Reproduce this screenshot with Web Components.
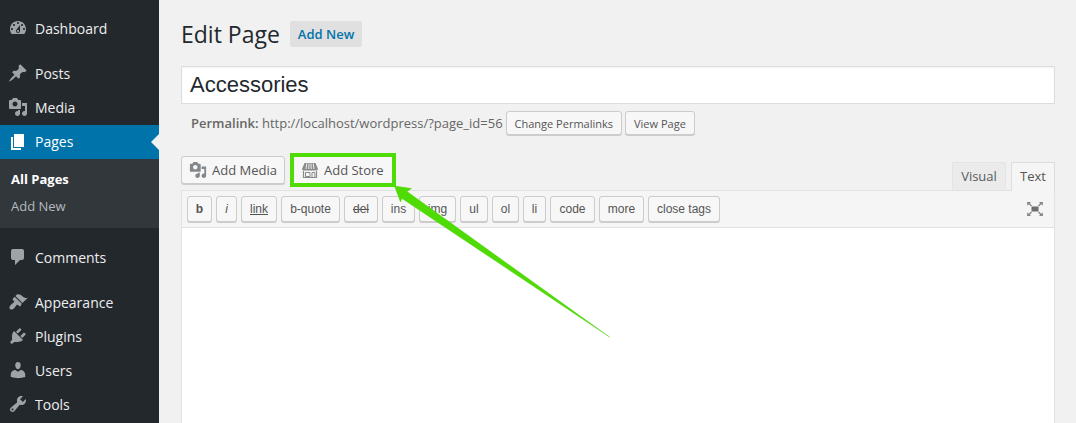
<!DOCTYPE html>
<html>
<head>
<meta charset="utf-8">
<title>Edit Page</title>
<style>
  html, body { margin: 0; height: 423px; overflow: hidden; background: #f1f1f1; }
  body { font-family: "Open Sans", sans-serif; }
</style>
</head>
<body>
<wp-admin>
  <wp-sidebar slot="sidebar">
    <wp-menu-item icon="dashboard">Dashboard</wp-menu-item>
    <wp-menu-sep></wp-menu-sep>
    <wp-menu-item icon="post">Posts</wp-menu-item>
    <wp-menu-item icon="media">Media</wp-menu-item>
    <wp-menu-item icon="page" active style="margin-top:1px">Pages</wp-menu-item>
    <wp-submenu>
      <wp-submenu-item current>All Pages</wp-submenu-item>
      <wp-submenu-item>Add New</wp-submenu-item>
    </wp-submenu>
    <wp-menu-item icon="comments" style="margin-top:12px">Comments</wp-menu-item>
    <wp-menu-sep></wp-menu-sep>
    <wp-menu-item icon="appearance">Appearance</wp-menu-item>
    <wp-menu-item icon="plugins">Plugins</wp-menu-item>
    <wp-menu-item icon="users">Users</wp-menu-item>
    <wp-menu-item icon="tools">Tools</wp-menu-item>
  </wp-sidebar>
  <wp-page-head></wp-page-head>
  <wp-title-box value="Accessories"></wp-title-box>
  <wp-permalink url="http://localhost/wordpress/?page_id=56"></wp-permalink>
  <wp-editor></wp-editor>
</wp-admin>

<script>
const ICONS = {
  dashboard: 'M3.76 16h12.48c1.1-1.37 1.76-3.11 1.76-5 0-4.42-3.58-8-8-8s-8 3.58-8 8c0 1.89.66 3.63 1.76 5zM10 4c.55 0 1 .45 1 1s-.45 1-1 1-1-.45-1-1 .45-1 1-1zM6 6c.55 0 1 .45 1 1s-.45 1-1 1-1-.45-1-1 .45-1 1-1zm8 0c.55 0 1 .45 1 1s-.45 1-1 1-1-.45-1-1 .45-1 1-1zm-5.37 5.55L12 7v6c0 1.1-.9 2-2 2s-2-.9-2-2c0-.57.24-1.08.63-1.45zM4 10c.55 0 1 .45 1 1s-.45 1-1 1-1-.45-1-1 .45-1 1-1zm12 0c.55 0 1 .45 1 1s-.45 1-1 1-1-.45-1-1 .45-1 1-1zm-5 3c0-.55-.45-1-1-1s-1 .45-1 1 .45 1 1 1 1-.45 1-1z',
  post: 'M10.44 3.02l1.82-1.82 6.36 6.35-1.83 1.82c-1.05-.68-2.48-.57-3.41.36l-.75.75c-.92.93-1.04 2.35-.35 3.41l-1.83 1.82-2.41-2.41-2.8 2.79c-.42.42-3.38 2.71-3.8 2.29s1.86-3.39 2.28-3.81l2.79-2.79L4.1 9.36l1.83-1.82c1.05.69 2.48.57 3.4-.36l.75-.75c.93-.92 1.05-2.35.36-3.41z',
  media: 'M13 11V4c0-.55-.45-1-1-1h-1.67L9 1H5L3.67 3H2c-.55 0-1 .45-1 1v7c0 .55.45 1 1 1h10c.55 0 1-.45 1-1zM7 4.5c1.38 0 2.5 1.12 2.5 2.5S8.38 9.5 7 9.5 4.5 8.38 4.5 7 5.62 4.5 7 4.5zM14 6h5v10.5c0 1.38-1.12 2.5-2.5 2.5S14 17.88 14 16.5s1.12-2.5 2.5-2.5c.17 0 .34.02.5.05V9h-3V6zm-4 8.05V13h2v3.5c0 1.38-1.12 2.5-2.5 2.5S7 17.88 7 16.5 8.12 14 9.5 14c.17 0 .34.02.5.05z',
  page: 'M6 15V2h10v13H6zm-1 1h8v2H3V5h2v11z',
  comments: 'M5 2h9c1.1 0 2 .9 2 2v7c0 1.1-.9 2-2 2h-2l-5 5v-5H5c-1.1 0-2-.9-2-2V4c0-1.1.9-2 2-2z',
  appearance: 'M14.48 11.06L7.41 3.99l1.5-1.5c.5-.56 2.3-.47 3.51.32 1.21.8 1.43 1.28 2.91 2.1 1.18.64 2.45 1.26 4.45.85zm-.71.71L6.7 4.7 4.93 6.47c-.39.39-.39 1.02 0 1.41l1.06 1.06c.39.39.39 1.03 0 1.42-.6.6-1.43 1.11-2.21 1.69-.35.26-.7.53-1.01.84-1.35 1.35-1.85 3.1-.79 4.16 1.06 1.06 2.81.56 4.16-.79.31-.31.58-.66.84-1.01.58-.78 1.09-1.61 1.69-2.21.39-.39 1.03-.39 1.42 0l1.06 1.06c.39.39 1.02.39 1.41 0z',
  plugins: 'M13.11 4.36L9.87 7.6 8 5.73l3.24-3.24c.35-.34 1.05-.2 1.56.32.52.51.66 1.21.31 1.55zm-8 1.77l.91-1.12 9.01 9.01-1.19.84c-.71.71-2.63 1.16-3.82 1.16H6.14L4.9 17.26c-.59.59-1.54.59-2.12 0-.59-.58-.59-1.53 0-2.12l1.24-1.24v-3.88c0-1.13.4-3.19 1.09-3.89zm7.26 3.97l3.24-3.24c.34-.35 1.04-.21 1.55.31.52.51.66 1.21.31 1.55l-3.24 3.25z',
  users: 'M10 9.25c-2.27 0-2.73-3.44-2.73-3.44C7 4.02 7.82 2 9.97 2c2.16 0 2.98 2.02 2.71 3.81 0 0-.41 3.44-2.68 3.44zm0 2.57L12.72 10c2.39 0 4.52 2.33 4.52 4.53v2.49s-3.65 1.13-7.24 1.13c-3.65 0-7.24-1.13-7.24-1.13v-2.49c0-2.25 1.94-4.48 4.47-4.48z',
  tools: 'M16.68 9.77c-1.34 1.34-3.3 1.67-4.95.99l-5.41 6.52c-.99.99-2.59.99-3.58 0s-.99-2.59 0-3.57l6.52-5.42c-.68-1.65-.35-3.61.99-4.95 1.28-1.28 3.12-1.62 4.72-1.06l-2.89 2.89 2.82 2.82 2.86-2.87c.53 1.58.18 3.39-1.08 4.65zM3.81 16.21c.4.39 1.04.39 1.43 0 .4-.4.4-1.04 0-1.43-.39-.4-1.03-.4-1.43 0-.39.39-.39 1.03 0 1.43z'
};

function icon(name, size) {
  return `<svg width="${size}" height="${size}" viewBox="0 0 20 20" fill="currentColor"><path d="${ICONS[name]}"/></svg>`;
}

class WpAdmin extends HTMLElement {
  constructor() {
    super();
    this.attachShadow({mode: 'open'}).innerHTML = `
      <style>
        :host { display: grid; grid-template-columns: 159px 874px; column-gap: 22px; height: 423px; position: relative; overflow: hidden; }
        #main { display: block; min-width: 0; }
        svg { position: absolute; left: 0; top: 0; pointer-events: none; }
      </style>
      <slot name="sidebar"></slot>
      <div id="main"><slot></slot></div>
      <svg width="1076" height="423">
        <polygon points="394.5,186 411.5,188.5 407,191.5 609.5,337 402,198.5 400.5,202" fill="#4fdc05" stroke="#46c903" stroke-width=".4"/>
      </svg>`;
  }
}

class WpSidebar extends HTMLElement {
  constructor() {
    super();
    this.attachShadow({mode: 'open'}).innerHTML = `
      <style>
        :host { display: block; background: #23282d; padding-top: 11px; height: 412px; }
      </style>
      <slot></slot>`;
  }
}

class WpMenuSep extends HTMLElement {
  constructor() {
    super();
    this.attachShadow({mode: 'open'}).innerHTML = `<style>:host { display: block; height: 11px; }</style>`;
  }
}

class WpMenuItem extends HTMLElement {
  constructor() {
    super();
    const active = this.hasAttribute('active');
    this.attachShadow({mode: 'open'}).innerHTML = `
      <style>
        :host { display: flex; align-items: center; height: 34px; position: relative; color: #eee; background: ${active ? '#0073aa' : 'transparent'}; font: 500 14px "Open Sans", sans-serif; }
        #icon { width: 35px; display: flex; justify-content: center; color: ${active ? '#fff' : '#9ea3a8'}; }
        #label { color: ${active ? '#fff' : '#eee'}; ${active ? 'margin-top: -2px;' : ''} }
        #notch { position: absolute; right: 0; top: 9px; border: 8px solid transparent; border-right-color: #f1f1f1; border-left-width: 0; }
      </style>
      <div id="icon">${icon(this.getAttribute('icon'), 20)}</div>
      <span id="label"><slot></slot></span>
      ${active ? '<div id="notch"></div>' : ''}`;
  }
}

class WpSubmenu extends HTMLElement {
  constructor() {
    super();
    this.attachShadow({mode: 'open'}).innerHTML = `
      <style>:host { display: flex; flex-direction: column; gap: 7px; background: #32373c; padding: 10px 0 12px 11px; }</style>
      <slot></slot>`;
  }
}

class WpSubmenuItem extends HTMLElement {
  constructor() {
    super();
    const current = this.hasAttribute('current');
    this.attachShadow({mode: 'open'}).innerHTML = `
      <style>:host { display: block; font: ${current ? 700 : 500} 13px/20px "Open Sans", sans-serif; color: ${current ? '#fff' : '#b4b9be'}; }</style>
      <slot></slot>`;
  }
}

class WpPageHead extends HTMLElement {
  constructor() {
    super();
    this.attachShadow({mode: 'open'}).innerHTML = `
      <style>
        :host { display: flex; align-items: center; gap: 10px; height: 26px; padding-top: 21px; }
        h1 { margin: 0; font: 400 23px/26px "Open Sans", sans-serif; color: #23282d; }
        a { display: block; padding: 0 8px; height: 26px; background: #e0e0e0; border-radius: 2px; color: #0073aa; font: 600 13px/27px "Open Sans", sans-serif; }
      </style>
      <h1>Edit Page</h1>
      <a>Add New</a>`;
  }
}

class WpTitleBox extends HTMLElement {
  constructor() {
    super();
    this.attachShadow({mode: 'open'}).innerHTML = `
      <style>
        :host { display: block; margin-top: 19px; height: 36px; padding: 0 8px; background: #fff; border: 1px solid #ddd; box-shadow: inset 0 1px 2px rgba(0,0,0,.05); font: 22px/36px "Liberation Sans", sans-serif; color: #23282d; }
      </style>
      <span>${this.getAttribute('value')}</span>`;
  }
}

class WpButton extends HTMLElement {
  constructor() {
    super();
    this.attachShadow({mode: 'open'}).innerHTML = `
      <style>
        :host { display: inline-flex; align-items: center; gap: 6px; box-sizing: border-box; height: 24px; padding: 0 8px; background: #f7f7f7; border: 1px solid #ccc; border-radius: 3px; box-shadow: 0 1px 0 #ccc; color: #555; font: 400 11px "Open Sans", sans-serif; white-space: nowrap; }
        :host([large]) { height: 28px; font-size: 13px; padding: 0 7px; gap: 5px; }
        :host([mark]) { height: 34px; border: 4px solid #4fdc05; border-radius: 0; padding: 0 8px; font-size: 13px; gap: 6px; box-shadow: none; }
      </style>
      <slot name="icon"></slot><slot></slot>`;
  }
}

class WpPermalink extends HTMLElement {
  constructor() {
    super();
    this.attachShadow({mode: 'open'}).innerHTML = `
      <style>
        :host { display: flex; align-items: center; gap: 3px; height: 24px; margin-top: 7px; padding-left: 10px; font: 400 13px "Open Sans", sans-serif; color: #666; }
        span { white-space: nowrap; }
        b { font-weight: 600; }
      </style>
      <span><b>Permalink:</b> ${this.getAttribute('url')}</span>
      <wp-button>Change Permalinks</wp-button>
      <wp-button>View Page</wp-button>`;
  }
}

class EdButton extends HTMLElement {
  constructor() {
    super();
    this.attachShadow({mode: 'open'}).innerHTML = `
      <style>
        :host { display: flex; align-items: center; justify-content: center; box-sizing: border-box; height: 26px; background: #f7f7f7; border: 1px solid #ccc; border-radius: 3px; box-shadow: 0 1px 0 #ccc; color: #555; font: 12px "Liberation Sans", sans-serif; white-space: nowrap; width: ${this.getAttribute('w')}px; }
      </style>
      <slot></slot>`;
  }
}

class WpEditor extends HTMLElement {
  constructor() {
    super();
    const buttons = [
      ['b', 25, 'font-weight:700'], ['i', 21, 'font-style:italic'], ['link', 36, 'text-decoration:underline'],
      ['b-quote', 59], ['del', 34, 'text-decoration:line-through'], ['ins', 33], ['img', 37], ['ul', 28],
      ['ol', 27], ['li', 23], ['code', 45], ['more', 45], ['close tags', 72]
    ];
    const toolbar = buttons.map(([t, w, s]) => `<ed-button w="${w}"><span style="${s || ''}">${t}</span></ed-button>`).join('');
    this.attachShadow({mode: 'open'}).innerHTML = `
      <style>
        :host { display: block; margin-top: 17px; }
        #tools { display: flex; align-items: flex-end; height: 38px; }
        #media { display: flex; align-items: center; gap: 5px; flex: 1; align-self: stretch; padding-bottom: 2px; }
        #tabs { display: flex; gap: 5px; }
        .tab { box-sizing: border-box; width: 54px; height: 28px; text-align: center; line-height: 27px; font-size: 13px; background: #ebebeb; color: #555b60; border: 1px solid #e4e4e4; border-bottom: 0; }
        .tab.on { width: 44px; background: #f5f5f5; height: 29px; margin-bottom: -1px; position: relative; color: #555; border-color: #ddd; }
        #bar { display: flex; align-items: center; gap: 4px; box-sizing: border-box; height: 38px; padding: 0 5px; background: #f5f5f5; border: 1px solid #e2e2e2; }
        #full { margin-left: auto; display: flex; padding-right: 6px; }
        #body { height: 200px; background: #fff; border: 1px solid #e2e2e2; border-top: 0; }
      </style>
      <div id="tools">
        <div id="media">
          <wp-button large><span slot="icon" style="display:flex;color:#82878c">${icon('media', 18)}</span>Add Media</wp-button>
          <wp-button mark>
            <svg slot="icon" width="16" height="16" viewBox="0 0 16 16">
              <path d="M2.500 1h11L16 7H0z" fill="#8a8a8a"/>
              <path d="M4.800 1.500 4 7M7 1.500 6.800 7M9 1.500 9.200 7M11.200 1.500 12 7" stroke="#eee" stroke-width="1" fill="none"/>
              <path d="M0 7h16c0 1.300-1.500 1.800-2.700 1.300-1 .6-2.300.6-2.700 0-.8.6-2.300.6-2.700 0-.6.6-1.900.6-2.700 0-.8.6-2.300.6-2.700 0C1.500 8.800 0 8.300 0 7z" fill="#8a8a8a"/>
              <path d="M1.500 9v6.500h13V9" stroke="#8a8a8a" stroke-width="1.200" fill="none"/>
              <path d="M3.500 10.500h4.500v4h-4.500zM10 10.500h2.800v5H10z" fill="none" stroke="#8a8a8a" stroke-width="1"/>
            </svg>Add Store</wp-button>
        </div>
        <div id="tabs"><div class="tab">Visual</div><div class="tab on">Text</div></div>
      </div>
      <div id="bar">
        ${toolbar}
        <div id="full">
          <svg width="16" height="14" viewBox="0 0 16 14">
            <path d="M0 0h4L2.800 1.200 5 3.400 4 4.400 1.800 2.200.3 3.700zM16 0h-4l1.200 1.200L11 3.400l1 1 2.200-2.200 1.500 1.500zM0 14h4l-1.200-1.200L5 10.600l-1-1-2.200 2.200-1.500-1.500zM16 14h-4l1.200-1.200L11 10.600l1-1 2.200 2.200 1.500-1.500z" fill="#888"/>
            <rect x="4.500" y="4.500" width="7" height="5" fill="#6e6e6e"/>
          </svg>
        </div>
      </div>
      <div id="body"></div>`;
  }
}

customElements.define('wp-admin', WpAdmin);
customElements.define('wp-sidebar', WpSidebar);
customElements.define('wp-menu-sep', WpMenuSep);
customElements.define('wp-menu-item', WpMenuItem);
customElements.define('wp-submenu', WpSubmenu);
customElements.define('wp-submenu-item', WpSubmenuItem);
customElements.define('wp-page-head', WpPageHead);
customElements.define('wp-title-box', WpTitleBox);
customElements.define('wp-button', WpButton);
customElements.define('wp-permalink', WpPermalink);
customElements.define('ed-button', EdButton);
customElements.define('wp-editor', WpEditor);
</script>
</body>
</html>
